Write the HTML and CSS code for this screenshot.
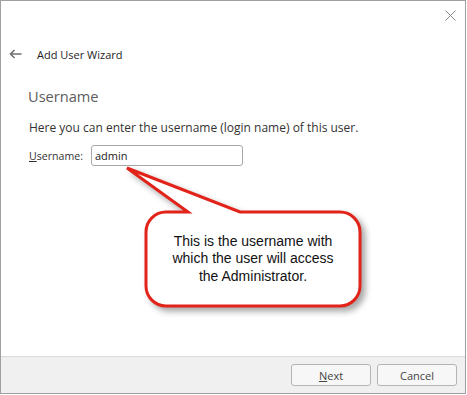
FILE: index.html
```html
<!DOCTYPE html>
<html lang="en">
<head>
  <meta charset="UTF-8" />
  <title>Add User Wizard</title>
  <link rel="stylesheet" href="styles.css">
</head>
<body>
  <div class="window">
    <div class="topbar">
      <svg class="close" width="11" height="11" viewBox="0 0 11 11">
        <path d="M0.5 0.5 L10.5 10.5 M10.5 0.5 L0.5 10.5" stroke="#8a8a8a" stroke-width="1" fill="none" />
      </svg>
    </div>

    <div class="title-row">
      <svg class="back" width="13" height="10" viewBox="0 0 13 10">
        <path d="M12.5 5 L1.5 5 M5.5 1 L1.5 5 L5.5 9" stroke="#707070" stroke-width="1.6" fill="none" />
      </svg>
      <span class="title">Add User Wizard</span>
    </div>

    <div class="content">
      <h2>Username</h2>
      <p class="hint">Here you can enter the username (login name) of this user.</p>
      <div class="field">
        <label for="username"><u>U</u>sername:</label>
        <input type="text" id="username" value="admin" />
      </div>
    </div>

    <div class="footer">
      <button class="btn"><u>N</u>ext</button>
      <button class="btn">Cancel</button>
    </div>
  </div>

  <div class="callout">
    <svg class="bubble" width="250" height="160" viewBox="0 0 250 160">
      <path d="M46 52 L68 52 L7 8 L120 52 L220 52 A20 20 0 0 1 240 72 L240 126 A20 20 0 0 1 220 146 L46 146 A20 20 0 0 1 26 126 L26 72 A20 20 0 0 1 46 52 Z"
            fill="#ffffff" stroke="#e2231a" stroke-width="3" stroke-linejoin="miter" />
    </svg>
    <div class="callout-text">This is the username with<br>which the user will access<br>the Administrator.</div>
  </div>
</body>
</html>
```

FILE: styles.css
```css
body {
  margin: 0;
  font-family: 'Open Sans', 'Noto Sans', sans-serif;
  background: #ffffff;
  color: #222;
}

.window {
  position: relative;
  width: 466px;
  height: 394px;
  box-sizing: border-box;
  border: 1px solid #a0a0a0;
  display: flex;
  flex-direction: column;
  background: #ffffff;
}

.topbar {
  height: 38px;
  display: flex;
  justify-content: flex-end;
  align-items: flex-start;
}

.close {
  margin-top: 9px;
  margin-right: 9px;
}

.title-row {
  height: 30px;
  display: flex;
  align-items: center;
}

.back {
  margin-left: 8px;
  margin-right: 15px;
}

.title {
  font-size: 11px;
  color: #1e1e1e;
}

.content {
  padding: 0 27px;
  flex: 1;
}

.content h2 {
  margin: 17px 0 0;
  font-size: 14.6px;
  font-weight: 400;
  color: #5c5c5c;
  line-height: 20px;
}

.hint {
  margin: 14px 0 0;
  font-size: 12px;
  color: #333;
  line-height: 16px;
  padding-left: 1px;
}

.field {
  margin-top: 9px;
  display: flex;
  align-items: center;
  padding-left: 1px;
}

.field label {
  font-size: 10.6px;
  color: #333;
  width: 62px;
}

.field input {
  width: 152px;
  height: 21px;
  box-sizing: border-box;
  border: 1px solid #a8a8a8;
  border-radius: 3px;
  padding: 0 3px;
  font-family: 'Open Sans', 'Noto Sans', sans-serif;
  font-size: 11px;
  color: #222;
}

.footer {
  height: 37px;
  border-top: 1px solid #dadada;
  background: #f0f0f0;
  display: flex;
  justify-content: flex-end;
  align-items: flex-start;
  gap: 6px;
  padding: 7px 8px 0 0;
  box-sizing: border-box;
}

.btn {
  width: 80px;
  height: 22px;
  border: 1px solid #b4b4b4;
  border-radius: 3px;
  background: #f7f7f7;
  font-family: 'Open Sans', 'Noto Sans', sans-serif;
  font-size: 11px;
  color: #444;
  padding: 0;
}

.callout {
  position: absolute;
  left: 120px;
  top: 160px;
  width: 250px;
  height: 160px;
}

.bubble {
  display: block;
  filter: drop-shadow(4px 4px 3px rgba(0, 0, 0, 0.35));
}

.callout-text {
  position: absolute;
  left: 28px;
  top: 54px;
  width: 210px;
  height: 90px;
  display: flex;
  align-items: center;
  justify-content: center;
  text-align: center;
  font-family: 'Liberation Sans', Arial, sans-serif;
  font-size: 14px;
  line-height: 17.5px;
  color: #111;
}
```
